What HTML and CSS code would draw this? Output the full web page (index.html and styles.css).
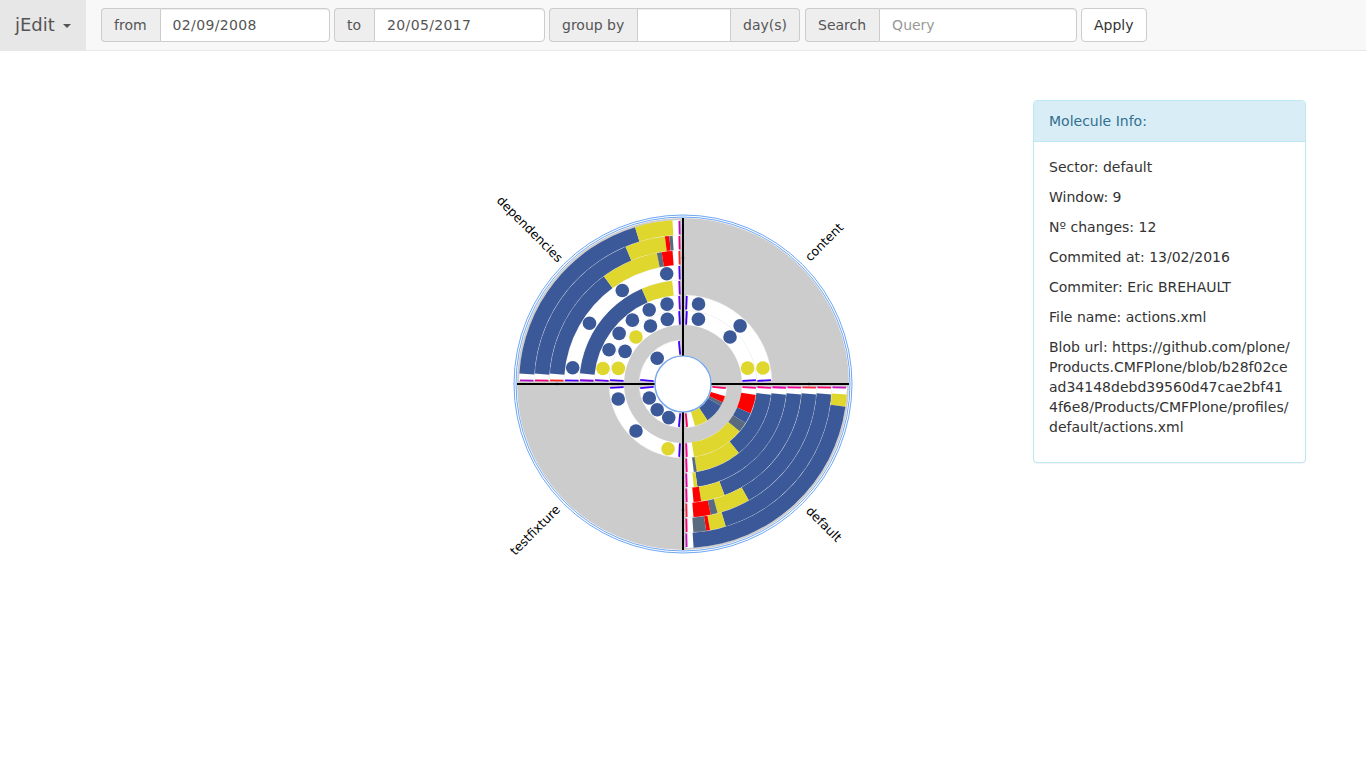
FILE: index.html
```html
<!DOCTYPE html>
<html lang="en">
<head>
<meta charset="utf-8">
<title>jEdit</title>
<link rel="stylesheet" href="styles.css">
</head>
<body>
<nav class="navbar">
  <a class="brand" href="#">jEdit <span class="caret"></span></a>
  <form class="filters">
    <div class="group group-from"><span class="addon">from</span><input class="field" type="text" value="02/09/2008"></div>
    <div class="group group-to"><span class="addon">to</span><input class="field" type="text" value="20/05/2017"></div>
    <div class="group group-by"><span class="addon">group by</span><input class="field" type="text"><span class="addon addon-end">day(s)</span></div>
    <div class="group group-search"><span class="addon">Search</span><input class="field" type="text" placeholder="Query"></div>
    <button class="apply" type="button">Apply</button>
  </form>
</nav>
<main class="content">
  <div class="chart-col">
    <svg class="chart" width="400" height="400" viewBox="0 0 400 400" role="img">
      <circle class="halo" cx="200" cy="200" r="169"></circle>
      <circle class="halo" cx="200" cy="200" r="167"></circle>
      <circle class="disc" cx="200" cy="200" r="166"></circle>
      <g id="rings"></g>
      <g class="ticks-axis">
        <line x1="198" y1="74" x2="202" y2="74"></line>
        <line x1="198" y1="326" x2="202" y2="326"></line>
        <line x1="74" y1="198" x2="74" y2="202"></line>
        <line x1="326" y1="198" x2="326" y2="202"></line>
      </g>
      <line class="axis" x1="200" y1="34" x2="200" y2="366"></line>
      <line class="axis" x1="34" y1="200" x2="366" y2="200"></line>
      <circle class="hub" cx="200" cy="200" r="28"></circle>
      <text class="label" x="341" y="58" transform="rotate(-45 341 58)">content</text>
      <text class="label" x="341" y="340" transform="rotate(45 341 340)">default</text>
      <text class="label" x="52" y="346" transform="rotate(-45 52 346)">testfixture</text>
      <text class="label" x="47" y="45" transform="rotate(45 47 45)">dependencies</text>
    </svg>
  </div>
  <aside class="panel">
    <h2 class="panel-heading">Molecule Info:</h2>
    <div class="panel-body">
      <p>Sector: default</p>
      <p>Window: 9</p>
      <p>Nº changes: 12</p>
      <p>Commited at: 13/02/2016</p>
      <p>Commiter: Eric BREHAULT</p>
      <p>File name: actions.xml</p>
      <p>Blob url: https://github.com/plone/Products.CMFPlone/blob/b28f02cead34148debd39560d47cae2bf414f6e8/Products/CMFPlone/profiles/default/actions.xml</p>
    </div>
  </aside>
</main>
<script src="chart.js"></script>
</body>
</html>
```
FILE: styles.css
```css
* { box-sizing: border-box; }
html, body { margin: 0; height: 100%; }
body {
  font-family: "DejaVu Sans", sans-serif;
  font-size: 14px;
  line-height: 20px;
  color: #333;
  background: #fff;
  overflow: hidden;
}
.navbar {
  display: flex;
  height: 51px;
  background: #f8f8f8;
  border-bottom: 1px solid #e7e7e7;
}
.brand {
  display: block;
  width: 86px;
  height: 50px;
  padding: 15px;
  font-size: 18px;
  color: #555;
  background: #e7e7e7;
  text-decoration: none;
}
.caret {
  display: inline-block;
  width: 0;
  height: 0;
  margin-left: 2px;
  vertical-align: middle;
  border-top: 4px solid #555;
  border-left: 4px solid transparent;
  border-right: 4px solid transparent;
}
.filters {
  display: flex;
  align-items: flex-start;
  padding: 8px 0 0 15px;
}
.group { display: flex; height: 34px; }
.group-from { width: 229px; margin-right: 4px; }
.group-to { width: 211px; margin-right: 4px; }
.group-by { width: 251px; margin-right: 5px; }
.group-search { width: 272px; margin-right: 4px; }
.addon {
  flex: none;
  padding: 6px 13px 6px 12px;
  color: #555;
  background: #eee;
  border: 1px solid #ccc;
  border-radius: 4px 0 0 4px;
  border-right: 0;
}
.addon-end {
  padding: 6px 12px;
  border-radius: 0 4px 4px 0;
  border-right: 1px solid #ccc;
  border-left: 0;
}
.field {
  flex: 1;
  min-width: 0;
  padding: 6px 12px;
  font: inherit;
  color: #555;
  background: #fff;
  border: 1px solid #ccc;
  border-radius: 0 4px 4px 0;
  box-shadow: inset 0 1px 1px rgba(0, 0, 0, .075);
  outline: 0;
}
.group-from .field, .group-to .field { letter-spacing: .35px; }
.group-by .field { border-radius: 0; }
.field::placeholder { color: #999; opacity: 1; }
.apply {
  height: 34px;
  padding: 6px 12px;
  font: inherit;
  color: #333;
  background: #fff;
  border: 1px solid #ccc;
  border-radius: 4px;
}
.content {
  display: grid;
  grid-template-columns: 1fr 400px 1fr;
  align-items: start;
}
.chart-col {
  grid-column: 2;
  padding-top: 133px;
}
.chart { display: block; }
.panel {
  grid-column: 3;
  justify-self: end;
  width: 273px;
  margin: 49px 60px 0 0;
  background: #fff;
  border: 1px solid #bce8f1;
  border-radius: 4px;
  box-shadow: 0 1px 1px rgba(0, 0, 0, .05);
}
.panel-heading {
  margin: 0;
  padding: 10px 15px;
  font-size: 14px;
  font-weight: 400;
  line-height: 20px;
  color: #31708f;
  background: #d9edf7;
  border-bottom: 1px solid #bce8f1;
  border-radius: 3px 3px 0 0;
}
.panel-body {
  padding: 15px;
  word-break: break-all;
}
.panel-body p { margin: 0 0 10px; }
.halo { fill: none; stroke: #6ea6f5; stroke-width: 1; }
.disc { fill: #ccc; }
.hub { fill: #fff; stroke: #6ea6f5; stroke-width: 1.2; }
.axis { stroke: #000; stroke-width: 2; }
.ticks-axis line { stroke: #555; stroke-width: .5; }
.label {
  font-size: 12.5px;
  fill: #000;
  text-anchor: middle;
  dominant-baseline: central;
}
.ring-bg { fill: #fff; }
.seg-b { fill: #3b5998; }
.seg-y { fill: #dfd62e; }
.seg-r { fill: #f00; }
.seg-g { fill: #5b6b7f; }
.dot-b { fill: #3b5998; }
.dot-y { fill: #dfd62e; }
.sep { fill: none; stroke: #e6e6e6; stroke-width: .5; }
.tick { fill: none; stroke-width: 1.8; }
```
FILE: chart.js
```js
(function () {
  var NS = 'http://www.w3.org/2000/svg';
  var host = document.getElementById('rings');
  var C = 200, R0 = 29, W = 15;
  var rad = Math.PI / 180;

  function pt(r, deg) {
    return (C + r * Math.sin(deg * rad)).toFixed(2) + ' ' + (C - r * Math.cos(deg * rad)).toFixed(2);
  }
  function add(tag, attrs) {
    var el = document.createElementNS(NS, tag);
    for (var k in attrs) el.setAttribute(k, attrs[k]);
    host.appendChild(el);
    return el;
  }
  function band(r1, r2, a, b) {
    return 'M' + pt(r1, a) + 'A' + r1 + ' ' + r1 + ' 0 0 1 ' + pt(r1, b) +
      'L' + pt(r2, b) + 'A' + r2 + ' ' + r2 + ' 0 0 0 ' + pt(r2, a) + 'Z';
  }
  function arc(r, a, b) {
    return 'M' + pt(r, a) + 'A' + r + ' ' + r + ' 0 0 1 ' + pt(r, b);
  }

  var BLUE = '#4400ff';
  var sectors = [
    { start: 0, rings: {
      2: { tick: BLUE, dots: [['b', 13.4], ['b', 45], ['y', 76.2]] },
      3: { tick: BLUE, dots: [['b', 11], ['b', 44.5], ['y', 78.7]] }
    } },
    { start: 90, rings: {
      0: { tick: '#ff0066', segs: [['r', 16, 25], ['g', 25, 30], ['b', 30, 56], ['y', 56, 74]] },
      2: { tick: '#ff0090', segs: [['r', 8.6, 23.5], ['b', 23.5, 32], ['g', 32, 40], ['y', 40, 81.4]] },
      3: { tick: '#ff0090', segs: [['b', 7, 51], ['y', 51, 81], ['g', 81, 83]] },
      4: { tick: '#e800b0', segs: [['b', 6, 82], ['y', 82, 84]] },
      5: { tick: '#f80090', segs: [['b', 5.1, 69.5], ['y', 69.5, 81.2], ['r', 81.2, 84.9]] },
      6: { tick: '#ff2040', segs: [['b', 4.5, 60.5], ['y', 60.5, 75], ['g', 75, 78], ['r', 78, 85.5]] },
      7: { tick: '#ff0070', segs: [['b', 4, 73.3], ['y', 73.3, 79.5], ['r', 79.5, 81], ['g', 81, 86]] },
      8: { tick: '#c810c0', segs: [['y', 3.7, 8], ['b', 8, 86.3]] }
    } },
    { start: 180, rings: {
      0: { tick: BLUE, dots: [['b', 23], ['b', 45], ['b', 67.5]] },
      2: { tick: BLUE, dots: [['y', 13], ['b', 45], ['b', 77]] }
    } },
    { start: 270, rings: {
      0: { tick: BLUE, dots: [['b', 45]] },
      2: { tick: '#4400ff', dots: [['y', 13.6], ['b', 29.4], ['y', 45], ['b', 60.7], ['b', 76.4]] },
      3: { tick: '#6a00f0', dots: [['y', 11], ['b', 24.8], ['b', 38.4], ['b', 51.6], ['b', 65.5], ['b', 78.7]] },
      4: { tick: '#8000e0', segs: [['b', 6, 66.6], ['y', 66.6, 84]] },
      5: { tick: '#5000ff', dots: [['b', 8.4], ['b', 33], ['b', 57], ['b', 81.6]] },
      6: { tick: '#ff2020', segs: [['b', 4.5, 53.7], ['y', 53.7, 78.7], ['g', 78.7, 80.8], ['r', 80.8, 85.5]] },
      7: { tick: '#f00070', segs: [['b', 4, 67.3], ['y', 67.3, 83], ['r', 83, 84.7], ['g', 84.7, 86]] },
      8: { tick: '#b010c0', segs: [['b', 3.7, 73], ['y', 73, 86.3]] }
    } }
  ];

  sectors.forEach(function (sector) {
    Object.keys(sector.rings).forEach(function (key) {
      var i = +key, ring = sector.rings[key];
      var r1 = R0 + W * i, r2 = r1 + W, mid = r1 + W / 2;
      var off = Math.asin(3.5 / mid) / rad;
      var a = sector.start + off, b = sector.start + 90 - off;
      add('path', { 'class': 'ring-bg', d: band(r1, r2, a, b) });
      (ring.segs || []).forEach(function (s) {
        add('path', { 'class': 'seg-' + s[0], d: band(r1, r2, sector.start + s[1], sector.start + s[2]) });
      });
      if (i < 8) add('path', { 'class': 'sep', d: arc(r2, a, b) });
      add('path', { 'class': 'tick', stroke: ring.tick, d: 'M' + pt(r1 + 0.5, a) + 'L' + pt(r2 - 1, a) });
      add('path', { 'class': 'tick', stroke: ring.tick, d: 'M' + pt(r1 + 0.5, b) + 'L' + pt(r2 - 1, b) });
      (ring.dots || []).forEach(function (d) {
        var p = pt(mid, sector.start + d[1]).split(' ');
        add('circle', { 'class': 'dot-' + d[0], cx: p[0], cy: p[1], r: 6.8 });
      });
    });
  });
})();
```
